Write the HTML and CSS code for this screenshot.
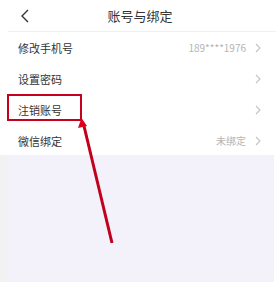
FILE: index.html
```html
<!DOCTYPE html>
<html lang="zh">
<head>
    <meta charset="UTF-8">
    <meta name="viewport" content="width=device-width, initial-scale=1.0">
    <link rel="stylesheet" href="styles.css">
</head>
<body>

<div class="page">
    <div class="header">
        <svg class="back" width="10" height="14" viewBox="0 0 10 14">
            <path d="M8 1 L2 7 L8 13" fill="none" stroke="#333" stroke-width="1.4"/>
        </svg>
        <div class="title">账号与绑定</div>
    </div>

    <div class="list">
        <div class="row">
            <span class="label">修改手机号</span>
            <span class="value">189****1976</span>
            <svg class="arrow" width="6" height="10" viewBox="0 0 6 10"><path d="M1 1 L5 5 L1 9" fill="none" stroke="#c4c4c4" stroke-width="1.1"/></svg>
        </div>
        <div class="row">
            <span class="label">设置密码</span>
            <span class="value"></span>
            <svg class="arrow" width="6" height="10" viewBox="0 0 6 10"><path d="M1 1 L5 5 L1 9" fill="none" stroke="#c4c4c4" stroke-width="1.1"/></svg>
        </div>
        <div class="row">
            <span class="label">注销账号</span>
            <span class="value"></span>
            <svg class="arrow" width="6" height="10" viewBox="0 0 6 10"><path d="M1 1 L5 5 L1 9" fill="none" stroke="#c4c4c4" stroke-width="1.1"/></svg>
        </div>
        <div class="row">
            <span class="label">微信绑定</span>
            <span class="value">未绑定</span>
            <svg class="arrow" width="6" height="10" viewBox="0 0 6 10"><path d="M1 1 L5 5 L1 9" fill="none" stroke="#c4c4c4" stroke-width="1.1"/></svg>
        </div>
    </div>

    <div class="blank"></div>

    <!-- annotation -->
    <div class="mark"></div>
    <svg class="pointer" width="276" height="282" viewBox="0 0 276 282">
        <line x1="112" y1="243" x2="84" y2="126" stroke="#c0001c" stroke-width="3"/>
        <polygon points="81.5,118 78,128 87,126" fill="#e0001e"/>
    </svg>
</div>

</body>
</html>
```

FILE: styles.css
```css
body {
    margin: 0;
    font-family: "Noto Sans CJK SC", "Noto Sans", sans-serif;
    background: #fff;
}

.page {
    position: relative;
    width: 276px;
    height: 282px;
    display: flex;
    flex-direction: column;
    overflow: hidden;
}

.header {
    height: 31px;
    display: flex;
    align-items: center;
    justify-content: center;
    position: relative;
    border-bottom: 1px solid #f0f0f0;
    margin-left: 8px;
}

.back {
    position: absolute;
    left: 12px;
    top: 9px;
}

.title {
    font-size: 13px;
    color: #333;
    margin-left: -4px;
}

.list {
    display: flex;
    flex-direction: column;
}

.row {
    height: 31px;
    display: flex;
    align-items: center;
    padding: 0 15px 0 18px;
}

.label {
    font-size: 11px;
    color: #333;
}

.value {
    margin-left: auto;
    margin-right: 9px;
    font-size: 10px;
    color: #b4b4b4;
}

.arrow {
    display: block;
}

.blank {
    flex: 1;
    margin-top: -1px;
    margin-left: 8px;
    margin-right: 2px;
    background: #f3f2fa;
    box-shadow: -8px 0 0 #f2f2f2;
}

.mark {
    position: absolute;
    left: 7px;
    top: 94px;
    width: 71px;
    height: 23px;
    border: 2.5px solid #c8001e;
}

.pointer {
    position: absolute;
    left: 0;
    top: 0;
}
```
